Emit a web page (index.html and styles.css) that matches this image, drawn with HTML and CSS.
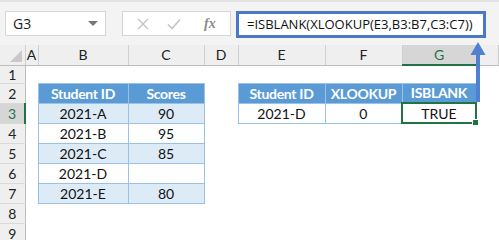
FILE: index.html
```html
<!DOCTYPE html>
<html lang="en">
<head>
    <meta charset="UTF-8">
    <title>ISBLANK XLOOKUP</title>
    <link rel="stylesheet" href="styles.css">
</head>
<body>

    <div class="sheet-window">
        <!-- Formula bar -->
        <div class="toolbar">
            <div class="name-box">
                <span>G3</span>
                <span class="caret"></span>
            </div>
            <div class="fx-buttons">
                <svg class="btn-x" width="14" height="14" viewBox="0 0 14 14"><path d="M2 2 L12 12 M12 2 L2 12" stroke="#c4c4c4" stroke-width="1.4" fill="none"/></svg>
                <svg class="btn-ok" width="16" height="14" viewBox="0 0 16 14"><path d="M2 7.5 L6 11.5 L14 2.5" stroke="#c4c4c4" stroke-width="1.6" fill="none"/></svg>
                <span class="fx">fx</span>
            </div>
            <div class="formula">=ISBLANK(XLOOKUP(E3,B3:B7,C3:C7))</div>
        </div>

        <!-- Grid -->
        <table class="grid">
            <colgroup>
                <col style="width:25px"><col style="width:13px"><col style="width:90px"><col style="width:76px">
                <col style="width:34px"><col style="width:87px"><col style="width:77px"><col style="width:74px"><col>
            </colgroup>
            <tr class="col-heads">
                <th class="corner"><span class="tri"></span></th>
                <th>A</th><th>B</th><th>C</th><th>D</th><th>E</th><th>F</th><th class="active">G</th><th></th>
            </tr>
            <tr class="r1">
                <th class="row-head">1</th><td></td><td></td><td></td><td></td><td></td><td></td><td></td><td></td>
            </tr>
            <tr>
                <th class="row-head">2</th><td></td>
                <td class="t-head">Student ID</td><td class="t-head">Scores</td>
                <td></td>
                <td class="t-head">Student ID</td><td class="t-head">XLOOKUP</td><td class="t-head">ISBLANK</td>
                <td></td>
            </tr>
            <tr>
                <th class="row-head active">3</th><td></td>
                <td class="t-cell band">2021-A</td><td class="t-cell band">90</td>
                <td></td>
                <td class="t-cell">2021-D</td><td class="t-cell">0</td><td class="t-cell selected">TRUE<span class="handle"></span></td>
                <td></td>
            </tr>
            <tr>
                <th class="row-head">4</th><td></td>
                <td class="t-cell">2021-B</td><td class="t-cell">95</td>
                <td></td><td></td><td></td><td></td><td></td>
            </tr>
            <tr>
                <th class="row-head">5</th><td></td>
                <td class="t-cell band">2021-C</td><td class="t-cell band">85</td>
                <td></td><td></td><td></td><td></td><td></td>
            </tr>
            <tr>
                <th class="row-head">6</th><td></td>
                <td class="t-cell">2021-D</td><td class="t-cell"></td>
                <td></td><td></td><td></td><td></td><td></td>
            </tr>
            <tr>
                <th class="row-head">7</th><td></td>
                <td class="t-cell band">2021-E</td><td class="t-cell band">80</td>
                <td></td><td></td><td></td><td></td><td></td>
            </tr>
            <tr>
                <th class="row-head">8</th><td></td><td></td><td></td><td></td><td></td><td></td><td></td><td></td>
            </tr>
            <tr>
                <th class="row-head">9</th><td></td><td></td><td></td><td></td><td></td><td></td><td></td><td></td>
            </tr>
        </table>

        <!-- Callout arrow from G3 to the formula -->
        <svg class="arrow" width="20" height="64" viewBox="0 0 20 64">
            <path d="M8 61 L8 14 L12 14 L12 61 Z" fill="#4f81d0"/>
            <path d="M10 1 L17.5 14 L2.5 14 Z" fill="#4f81d0"/>
        </svg>
    </div>

</body>
</html>
```

FILE: styles.css
```css
body {
    margin: 0;
    padding: 0;
    background-color: #fff;
    font-family: "Open Sans", "Noto Sans", sans-serif;
}

.sheet-window {
    position: relative;
    width: 499px;
    height: 240px;
    overflow: hidden;
}

.toolbar {
    height: 45px;
    box-sizing: border-box;
    background-color: #f3f3f3;
    border-top: 2px solid #e2e2e2;
    display: flex;
    align-items: flex-start;
    padding: 9px 0 0 5px;
}

.name-box {
    width: 101px;
    height: 25px;
    box-sizing: border-box;
    background-color: #fff;
    border: 1px solid #d6d6d6;
    display: flex;
    align-items: center;
    justify-content: space-between;
    padding: 0 7px 0 7px;
    font-size: 14px;
    color: #222;
}

.caret {
    width: 0;
    height: 0;
    border-left: 5px solid transparent;
    border-right: 5px solid transparent;
    border-top: 5px solid #777;
}

.fx-buttons {
    width: 109px;
    height: 25px;
    box-sizing: border-box;
    margin-left: 16px;
    background-color: #fff;
    border: 1px solid #d6d6d6;
    display: flex;
    align-items: center;
    padding-left: 13px;
}

.btn-ok {
    margin-left: 16px;
}

.fx {
    margin-left: 22px;
    font-family: "Liberation Serif", serif;
    font-style: italic;
    font-weight: bold;
    font-size: 14px;
    color: #8a8a8a;
}

.formula {
    width: 250px;
    height: 27px;
    box-sizing: border-box;
    margin-left: 5px;
    background-color: #fff;
    border: 3px solid #4a78c8;
    padding: 0 0 0 8px;
    font-size: 13px;
    line-height: 21px;
    color: #111;
    white-space: nowrap;
}

.grid {
    border-collapse: collapse;
    table-layout: fixed;
    width: 499px;
    font-family: "Lato", "Liberation Sans", sans-serif;
    font-size: 14px;
}

.grid th, .grid td {
    padding: 0;
    height: 20px;
    box-sizing: border-box;
    text-align: center;
    white-space: nowrap;
    overflow: visible;
}

.col-heads th {
    background-color: #efefef;
    font-weight: normal;
    color: #222;
    font-size: 14px;
    border-right: 1px solid #cfcfcf;
    border-bottom: 1px solid #bdbdbd;
}

.col-heads th.active {
    background-color: #d6d6d6;
    color: #217346;
    border-bottom: 2px solid #217346;
}

.corner {
    position: relative;
}

.tri {
    position: absolute;
    right: 3px;
    bottom: 3px;
    width: 0;
    height: 0;
    border-left: 12px solid transparent;
    border-bottom: 12px solid #c9c9c9;
}

.r1 th, .r1 td {
    height: 15px;
}

.row-head {
    background-color: #efefef;
    font-weight: normal;
    color: #222;
    font-size: 14px;
    border-right: 1px solid #bdbdbd;
    border-bottom: 1px solid #d9d9d9;
}

.row-head.active {
    background-color: #d6d6d6;
    color: #217346;
    border-right: 2px solid #217346;
}

.t-head {
    background-color: #5b9bd5;
    color: #fff;
    font-weight: bold;
    letter-spacing: -0.3px;
    border: 1px solid #9bc2e6;
}

.t-cell {
    color: #111;
    border: 1px solid #9bc2e6;
}

.band {
    background-color: #ddebf7;
}

.selected {
    position: relative;
    border: 2px solid #217346;
}

.handle {
    position: absolute;
    right: -4px;
    bottom: -4px;
    width: 5px;
    height: 5px;
    background-color: #217346;
    border: 1px solid #fff;
}

.arrow {
    position: absolute;
    left: 468px;
    top: 41px;
}
```
